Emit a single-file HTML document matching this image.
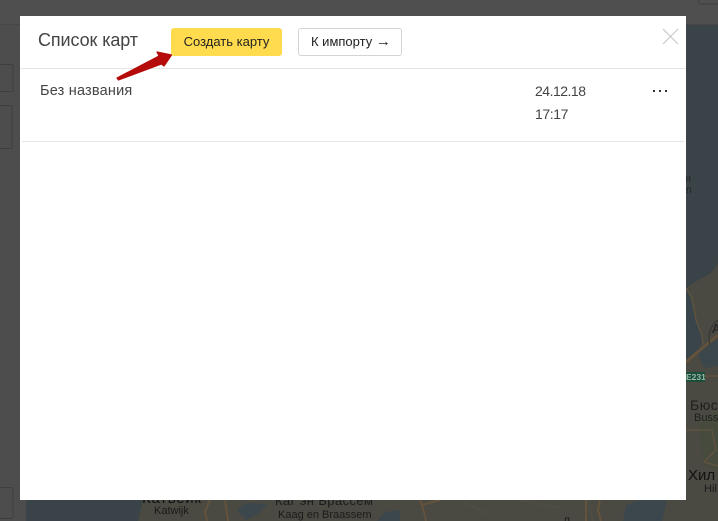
<!DOCTYPE html>
<html><head><meta charset="utf-8"><style>
html,body{margin:0;padding:0;width:718px;height:521px;overflow:hidden;background:#4d4d4d;font-family:"Liberation Sans",Arial,sans-serif}
.a{position:absolute;white-space:nowrap}
</style></head><body>
<div style="position:relative;width:718px;height:521px;overflow:hidden">
<svg class="a" style="left:0;top:0" width="718" height="521" viewBox="0 0 718 521">
<rect width="718" height="521" fill="#4d4d4d"/>
<rect x="26" y="24" width="692" height="497" fill="#3a4347"/>
<rect y="0" width="718" height="24" fill="#4f4f4f"/>
<rect y="24" width="718" height="1" fill="#474747"/>
<rect x="698.500" y="-3" width="24" height="7" rx="2" fill="none" stroke="#3e3e3e"/>
<rect x="-4" y="64.500" width="17" height="27" rx="1" fill="none" stroke="#3f3f3f"/>
<rect x="-4" y="105.500" width="16" height="43" rx="1" fill="none" stroke="#3f3f3f"/>
<rect x="-4" y="487.500" width="17" height="31" rx="2" fill="none" stroke="#3f3f3f"/>
<!-- land -->
<path d="M686 288 L700 279 L710 274 L718 263 V521 H138 L143 500 H686Z" fill="#4a4942"/>
<!-- water -->
<path d="M686 290 L692 298 L696 320 L702 335 L703 342 L686 362Z" fill="#3a454b"/>
<path d="M696 349 L718 339 V366 L704 368Z" fill="#3c474c"/>
<path d="M623 521 L626 505 L640 500 H667 L662 521Z" fill="#3c474d"/>
<path d="M237 510 L246 503 L267 504 L258 514 L246 520Z" fill="#3c474d"/>
<path d="M377 521 L385 512 L400 510 V521Z" fill="#3c474d"/>
<path d="M698 420 L718 410 V470 L704 465Z" fill="#464b3e"/>
<!-- roads -->
<path d="M686 362 L705 346 L718 335" fill="none" stroke="#63523c" stroke-width="3"/>
<path d="M686 288 L692 298 L696 320 L702 335 L703 344" fill="none" stroke="#5f533e" stroke-width="1.500"/>
<path d="M710 345 Q706 330 718 320" fill="none" stroke="#343434" stroke-width="1"/>
<path d="M704 376 H718 M686 430 H712 L716 450 L704 462 L718 466" fill="none" stroke="#5f533e" stroke-width="1.500"/>
<path d="M586 521 V500 M420 500 L424 512 L426 521 M422 505 L440 500 M600 500 L598 510 L601 521 M210 500 L205 512 L207 521 M225 500 L228 521" fill="none" stroke="#63523c" stroke-width="2"/>
<path d="M588 500 L593 521 M460 500 L490 515 M520 500 L560 508 M650 500 L668 495" fill="none" stroke="#525045" stroke-width="1"/>
<rect x="686" y="372" width="19" height="10" fill="#1a4f3b"/>
</svg>
<div class="a" style="left:686px;top:372px;width:19px;overflow:hidden;font-size:8.500px;line-height:10px;color:#9db8aa;font-weight:bold">E231</div>
<div class="a" style="left:685px;top:173px;font-size:11px;color:#252525">н</div>
<div class="a" style="left:686px;top:185px;font-size:10px;color:#252525">n</div>
<div class="a" style="left:712px;top:321px;font-size:13px;color:#1f1f1f">А</div>
<div class="a" style="left:690px;top:397px;font-size:14px;color:#1f1f1f;letter-spacing:.5px">Бюсс</div>
<div class="a" style="left:694px;top:412px;font-size:11px;color:#1f1f1f">Buss</div>
<div class="a" style="left:688px;top:467px;font-size:15px;color:#111">Хил</div>
<div class="a" style="left:704px;top:483px;font-size:11px;color:#1c1c1c">Hil</div>
<div class="a" style="left:142px;top:490px;font-size:15px;color:#111;letter-spacing:.7px">Катвейк</div>
<div class="a" style="left:154px;top:505px;font-size:11px;color:#1a1a1a">Katwijk</div>
<div class="a" style="left:275px;top:493px;font-size:13px;color:#1c1c1c;letter-spacing:.4px">Каг эн Брассем</div>
<div class="a" style="left:278px;top:509px;font-size:11px;color:#1c1c1c">Kaag en Braassem</div>
<div class="a" style="left:563px;top:516px;font-size:11px;color:#1a1a1a">Л</div>

<div class="a" style="left:20px;top:16px;width:666px;height:484px;background:#fff"></div>
<div class="a" style="left:20px;top:68px;width:666px;height:1px;background:#e5e5e5"></div>
<div class="a" style="left:22px;top:141px;width:662px;height:1px;background:#e5e5e5"></div>
<div class="a" style="left:38px;top:30px;font-size:18px;line-height:21px;color:#444;letter-spacing:-.1px">Список карт</div>
<div class="a" style="left:171px;top:28px;width:111px;height:28px;background:#ffdb4d;border-radius:3px;text-align:center;font-size:13px;line-height:28px;color:#222">Создать карту</div>
<div class="a" style="left:298px;top:28px;width:102px;height:26px;border:1px solid #d4d4d4;border-radius:3px;background:#fff;font-size:13px;line-height:26px;color:#222"><span class="a" style="left:12px;top:0">К импорту <span style="font-size:15px;line-height:20px">→</span></span></div>
<div class="a" style="left:40px;top:82px;font-size:14.500px;line-height:18px;color:#444;letter-spacing:.2px">Без названия</div>
<div class="a" style="left:535px;top:82px;font-size:14px;line-height:18px;color:#444;letter-spacing:-.5px">24.12.18</div>
<div class="a" style="left:535px;top:105px;font-size:14px;line-height:18px;color:#444;letter-spacing:-.4px">17:17</div>
<svg class="a" style="left:0;top:0" width="718" height="521" viewBox="0 0 718 521">
<path d="M663 29 L678 44 M678 29 L663 44" stroke="#c9c9c9" stroke-width="1.200" fill="none"/>
<rect x="653" y="90" width="2" height="2" fill="#333"/><rect x="659" y="90" width="2" height="2" fill="#333"/><rect x="665" y="90" width="2" height="2" fill="#333"/>
<path d="M117 78 L118.500 80 L161.500 64 L164 66 L171.500 55 L157 52 L159 56Z" fill="#b60b0b" stroke="#b60b0b" stroke-width="1.200" stroke-linejoin="round"/>
</svg>
</div>
</body></html>
